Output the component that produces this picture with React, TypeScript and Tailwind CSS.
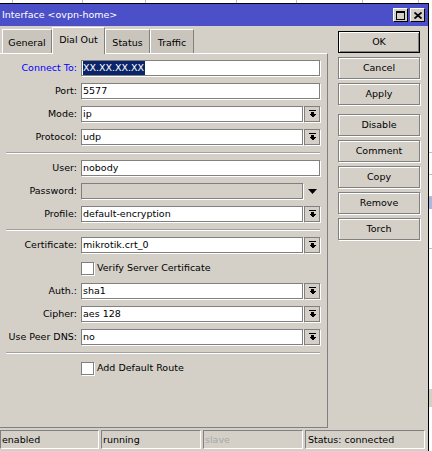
import type { ReactNode } from "react";
import clsx from "clsx";

const TABS = [
  { name: "General", w: "w-[50px]" },
  { name: "Dial Out", w: "w-[53px]", active: true },
  { name: "Status", w: "w-[45px]" },
  { name: "Traffic", w: "w-[44px]" },
];

const BUTTONS = ["Cancel", "Apply", "Disable", "Comment", "Copy", "Remove", "Torch"];

function DropBtn() {
  return (
    <div className="flex h-4 w-4 shrink-0 items-center justify-center border border-[#808080] bg-[#d4d0c8] shadow-[1px_1px_0_#fff]">
      <svg width="7" height="8" viewBox="0 0 7 8" shapeRendering="crispEdges">
        <rect x="0" y="0" width="7" height="1" fill="#000" />
        <rect x="2" y="2" width="3" height="2" fill="#000" />
        <polygon points="0,4 7,4 3.5,7.5" fill="#000" />
      </svg>
    </div>
  );
}

function Field({ children, disabled }: { children?: ReactNode; disabled?: boolean }) {
  return (
    <div
      className={clsx(
        "h-4 min-w-0 flex-1 overflow-hidden whitespace-nowrap border border-[#808080] pl-px leading-[14px] shadow-[1px_1px_0_#fff]",
        disabled ? "bg-[#d4d0c8]" : "bg-white",
      )}
    >
      {children}
    </div>
  );
}

function Row({ label, blue, children }: { label: string; blue?: boolean; children: ReactNode }) {
  return (
    <div className="flex h-4 items-center">
      <div className={clsx("w-[77px] shrink-0 whitespace-nowrap text-right leading-4", blue ? "text-[#0000ff]" : "text-black")}>
        {label}
      </div>
      <div className="ml-1 flex min-w-0 flex-1 gap-px">{children}</div>
    </div>
  );
}

function Check({ label }: { label: string }) {
  return (
    <div className="flex h-4 items-center pl-[81px]">
      <div className="h-[13px] w-[13px] border border-[#808080] bg-white shadow-[1px_1px_0_#fff]" />
      <span className="ml-[3px] leading-4">{label}</span>
    </div>
  );
}

function Sep() {
  return <div className="ml-[6px] h-px bg-[#a0a0a0] shadow-[0_1px_0_#fff]" />;
}

export default function App() {
  return (
    <div className="flex h-[451px] w-[432px] flex-col overflow-hidden bg-white font-['DejaVu_Sans',sans-serif] text-[9.5px] text-black">
      {/* list behind the dialog */}
      <div className="relative h-[3px] shrink-0 bg-white">
        {[12, 82, 145, 236, 296, 362, 418].map((x) => (
          <span key={x} className="absolute top-0 h-[3px] w-px bg-[#c0c0c0]" style={{ left: x }} />
        ))}
      </div>

      <div className="flex min-h-0 flex-1">
        <div className="flex w-[429px] flex-col border-t border-r border-black bg-[#d4d0c8]">
          {/* title bar */}
          <div className="flex h-[22px] shrink-0 items-center bg-[#4b4fc8] pl-[2px] pr-[3px] text-white">
            <span className="flex-1 whitespace-nowrap">Interface &lt;ovpn-home&gt;</span>
            <div className="flex gap-[2px]">
              <div className="flex h-[14px] w-[15px] items-center justify-center border border-t-white border-l-white border-r-black border-b-black bg-[#d4d0c8]">
                <svg width="9" height="9" viewBox="0 0 9 9" shapeRendering="crispEdges">
                  <rect x="0.5" y="0.5" width="8" height="8" fill="none" stroke="#000" />
                  <rect x="0" y="0" width="9" height="2" fill="#000" />
                </svg>
              </div>
              <div className="flex h-[14px] w-[15px] items-center justify-center border border-t-white border-l-white border-r-black border-b-black bg-[#d4d0c8]">
                <svg width="8" height="7" viewBox="0 0 8 7">
                  <path d="M0.5 0.5 L7.5 6.5 M7.5 0.5 L0.5 6.5" stroke="#000" strokeWidth="1.8" />
                </svg>
              </div>
            </div>
          </div>

          <div className="flex">
            {/* tabs + panel */}
            <div className="flex w-[328px] shrink-0 flex-col pt-px">
              <div className="flex h-[26px] items-end pl-[2px]">
                {TABS.map((t) =>
                  t.active ? (
                    <div
                      key={t.name}
                      className={clsx(
                        t.w,
                        "relative z-10 -mb-px flex h-[27px] items-start justify-center border-t border-l border-r border-t-white border-l-white border-r-[#808080] bg-[#d4d0c8] pt-[5px]",
                      )}
                    >
                      {t.name}
                    </div>
                  ) : (
                    <div
                      key={t.name}
                      className={clsx(
                        t.w,
                        "flex h-[24px] items-start justify-center border-t border-l border-r border-t-white border-l-white border-r-[#808080] bg-[#c9c5bd] pt-[6px]",
                      )}
                    >
                      {t.name}
                    </div>
                  ),
                )}
              </div>

              <div className="flex h-[375px] flex-col gap-[7px] border-t border-r border-b border-t-white border-r-[#808080] border-b-[#808080] pt-[6px] pr-[7px]">
                <Row label="Connect To:" blue>
                  <Field>
                    <span className="inline-block h-[14px] bg-[#0a246a] pr-px leading-[14px] text-white">XX.XX.XX.XX</span>
                  </Field>
                </Row>
                <Row label="Port:">
                  <Field>5577</Field>
                </Row>
                <Row label="Mode:">
                  <Field>ip</Field>
                  <DropBtn />
                </Row>
                <Row label="Protocol:">
                  <Field>udp</Field>
                  <DropBtn />
                </Row>
                <Sep />
                <Row label="User:">
                  <Field>nobody</Field>
                </Row>
                <Row label="Password:">
                  <Field disabled />
                  <div className="flex h-4 w-4 shrink-0 items-center justify-center">
                    <svg width="9" height="5" viewBox="0 0 9 5">
                      <polygon points="0,0 9,0 4.5,5" fill="#000" />
                    </svg>
                  </div>
                </Row>
                <Row label="Profile:">
                  <Field>default-encryption</Field>
                  <DropBtn />
                </Row>
                <Sep />
                <Row label="Certificate:">
                  <Field>mikrotik.crt_0</Field>
                  <DropBtn />
                </Row>
                <Check label="Verify Server Certificate" />
                <Row label="Auth.:">
                  <Field>sha1</Field>
                  <DropBtn />
                </Row>
                <Row label="Cipher:">
                  <Field>aes 128</Field>
                  <DropBtn />
                </Row>
                <Row label="Use Peer DNS:">
                  <Field>no</Field>
                  <DropBtn />
                </Row>
                <Sep />
                <Check label="Add Default Route" />
              </div>
            </div>

            {/* action buttons */}
            <div className="ml-[10px] flex w-[82px] flex-col gap-[4px] pt-[5px]">
              <button
                type="button"
                className="h-[22px] border border-black bg-[#d4d0c8] shadow-[inset_1px_1px_0_#fff,inset_-1px_-1px_0_#808080]"
              >
                OK
              </button>
              {BUTTONS.map((b) => (
                <button
                  key={b}
                  type="button"
                  className={clsx(
                    "h-[22px] border border-[#808080] bg-[#d4d0c8] shadow-[inset_1px_1px_0_#fff,1px_1px_0_#fff]",
                    b === "Disable" && "mt-[5px]",
                  )}
                >
                  {b}
                </button>
              ))}
            </div>
          </div>

          {/* status bar */}
          <div className="mt-[2px] flex h-[19px] gap-[2px]">
            <div className="w-[99px] border border-t-[#808080] border-l-[#808080] border-r-white border-b-white pl-px leading-[17px]">enabled</div>
            <div className="w-[100px] border border-t-[#808080] border-l-[#808080] border-r-white border-b-white pl-px leading-[17px]">running</div>
            <div className="w-[100px] border border-t-[#808080] border-l-[#808080] border-r-white border-b-white pl-px leading-[17px] text-[#a8a8a8]">slave</div>
            <div className="w-[120px] border border-t-[#808080] border-l-[#808080] border-r-white border-b-white pl-[2px] leading-[17px]">Status: connected</div>
          </div>
        </div>

        {/* list behind the dialog, right edge */}
        <div className="flex w-[3px] flex-col bg-white">
          <div className="h-[150px] border-b border-[#c0c0c0]" />
          <div className="h-[22px] border-b border-[#c0c0c0]" />
          <div className="h-[22px] border-b border-[#c0c0c0]" />
          <div className="h-[12px] bg-[#a8b8e0]" />
          <div className="h-[40px] border-b border-[#c0c0c0]" />
          <div className="h-[140px]" />
          <div className="h-[18px] bg-[#d4d0c8]" />
        </div>
      </div>
    </div>
  );
}
